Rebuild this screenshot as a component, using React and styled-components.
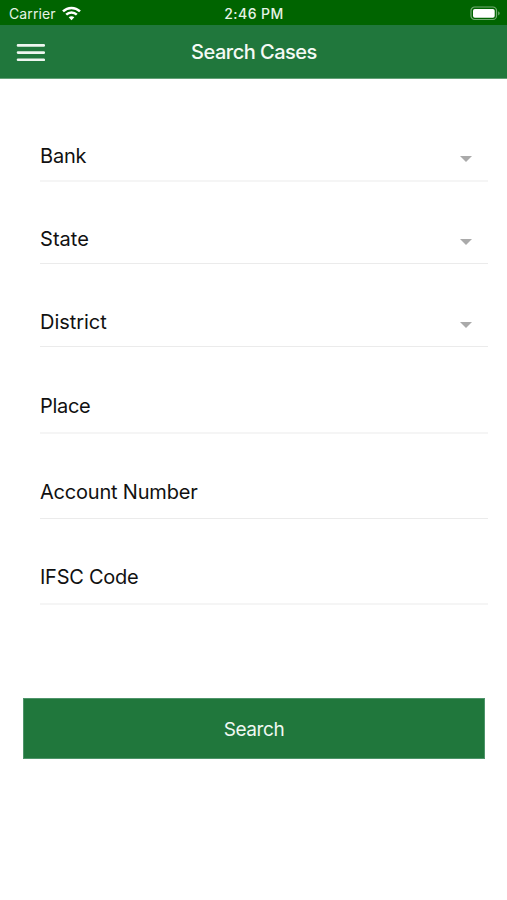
import React from "react";
import styled, { createGlobalStyle } from "styled-components";

const fields = [
  { label: "Bank", select: true, height: 83, line: 2, spacing: -0.2 },
  { label: "State", select: true, height: 82, line: 1, spacing: 0.05 },
  { label: "District", select: true, height: 83, line: 1, spacing: -0.05 },
  { label: "Place", height: 87, line: 2, spacing: -0.3 },
  { label: "Account Number", height: 85, line: 1, spacing: -0.2 },
  { label: "IFSC Code", height: 86, line: 2, spacing: -0.25 },
];

const App = () => {
  return (
    <Screen>
      <GlobalStyle />
      <StatusBar>
        <Carrier>
          <span>Carrier</span>
          <WifiIcon />
        </Carrier>
        <Time>2:46 PM</Time>
        <BatteryIcon />
      </StatusBar>

      <Header>
        <MenuButton aria-label="Menu">
          <MenuIcon />
        </MenuButton>
        <Title>Search Cases</Title>
      </Header>

      <Form>
        {fields.map((field) => (
          <Field key={field.label} $height={field.height} $line={field.line}>
            <Label $spacing={field.spacing} $select={field.select}>
              {field.label}
            </Label>
            {field.select && <Caret />}
          </Field>
        ))}
      </Form>

      <SearchButton>
        <span>Search</span>
      </SearchButton>
    </Screen>
  );
};

const WifiIcon = () => (
  <svg width="19" height="15" viewBox="0 0 19 15" fill="none" stroke="#fff" strokeWidth="2.5">
    <path d="M1 5.4C5.8.8 13.2.8 18 5.4" />
    <path d="M4.2 8.7C7.2 5.8 11.8 5.8 14.8 8.7" />
    <path d="M9.5 14.2L6.7 11.3C8.3 9.8 10.7 9.8 12.3 11.3Z" fill="#fff" stroke="none" />
  </svg>
);

const MenuIcon = () => (
  <svg width="29" height="20" viewBox="0 0 29 20" stroke="#eef6f0" strokeWidth="2.6" strokeLinecap="round">
    <path d="M2 3.4H27.8M2 10.6H27.8M2 17.8H27.8" />
  </svg>
);

const BatteryIcon = () => (
  <svg width="31" height="15" viewBox="0 0 31 15">
    <rect x="1" y="1" width="25.5" height="12.5" rx="3.6" fill="none" stroke="#74ad74" strokeWidth="1.2" />
    <rect x="3" y="3" width="21.7" height="8.7" rx="1.8" fill="#fff" />
    <path d="M28.2 5.2C30.2 6 30.2 8.6 28.2 9.4Z" fill="#74ad74" />
  </svg>
);

export default App;

const GlobalStyle = createGlobalStyle`
  * {
    box-sizing: border-box;
  }

  body {
    margin: 0;
    background: #fff;
    font-family: Inter, "Liberation Sans", sans-serif;
  }
`;

const Screen = styled.div`
  display: flex;
  flex-direction: column;
  height: 900px;
  overflow: hidden;
  background: #fff;
`;

const StatusBar = styled.div`
  display: grid;
  grid-template-columns: 1fr auto 1fr;
  align-items: center;
  height: 25px;
  padding: 2px 6px 0 9px;
  background: #006400;
  color: #e6f3e6;
  font-size: 14px;
  line-height: 23px;

  > svg {
    justify-self: end;
  }
`;

const Carrier = styled.div`
  display: flex;
  align-items: center;
  gap: 6px;
  letter-spacing: 0.1px;
`;

const Time = styled.div`
  padding-right: 2px;
  font-weight: 500;
  font-size: 14px;
  letter-spacing: 0.45px;
`;

const Header = styled.header`
  display: grid;
  grid-template-columns: 1fr auto 1fr;
  align-items: center;
  height: 54px;
  padding: 1px 16px 0;
  background: #20773c;
  border-bottom: 1px solid #63a077;
`;

const MenuButton = styled.button`
  justify-self: start;
  display: flex;
  padding: 0;
  border: none;
  background: none;
`;

const Title = styled.h1`
  margin: 0;
  padding: 1px 0 0 1px;
  color: #f4faf5;
  font-size: 20px;
  font-weight: 500;
  line-height: 25px;
  letter-spacing: -0.5px;
`;

const Form = styled.form`
  display: flex;
  flex-direction: column;
  padding: 20px 19px 0 40px;
`;

const Field = styled.div`
  display: flex;
  align-items: flex-end;
  justify-content: space-between;
  height: ${({ $height }) => $height}px;
  border-bottom: ${({ $line }) => ($line === 2 ? "2px solid #f5f5f5" : "1px solid #ebebeb")};
`;

const Label = styled.label`
  color: #111;
  font-size: 20px;
  line-height: 24px;
  letter-spacing: ${({ $spacing }) => $spacing}px;
  margin-bottom: ${({ $select }) => ($select ? 12 : 14)}px;
`;

const Caret = styled.span`
  width: 0;
  height: 0;
  margin: 0 16.5px 18px 0;
  border: 6px solid transparent;
  border-top-color: #aaa;
  border-bottom: none;
`;

const SearchButton = styled.button`
  display: flex;
  align-items: center;
  justify-content: center;
  height: 61px;
  margin: 93px 22px 0 23px;
  padding: 1px 0 0;
  border: 1px solid #4e946a;
  background: #20773c;
  color: #f0f8f2;
  font-family: inherit;
  font-size: 19px;
  letter-spacing: -0.45px;
`;
